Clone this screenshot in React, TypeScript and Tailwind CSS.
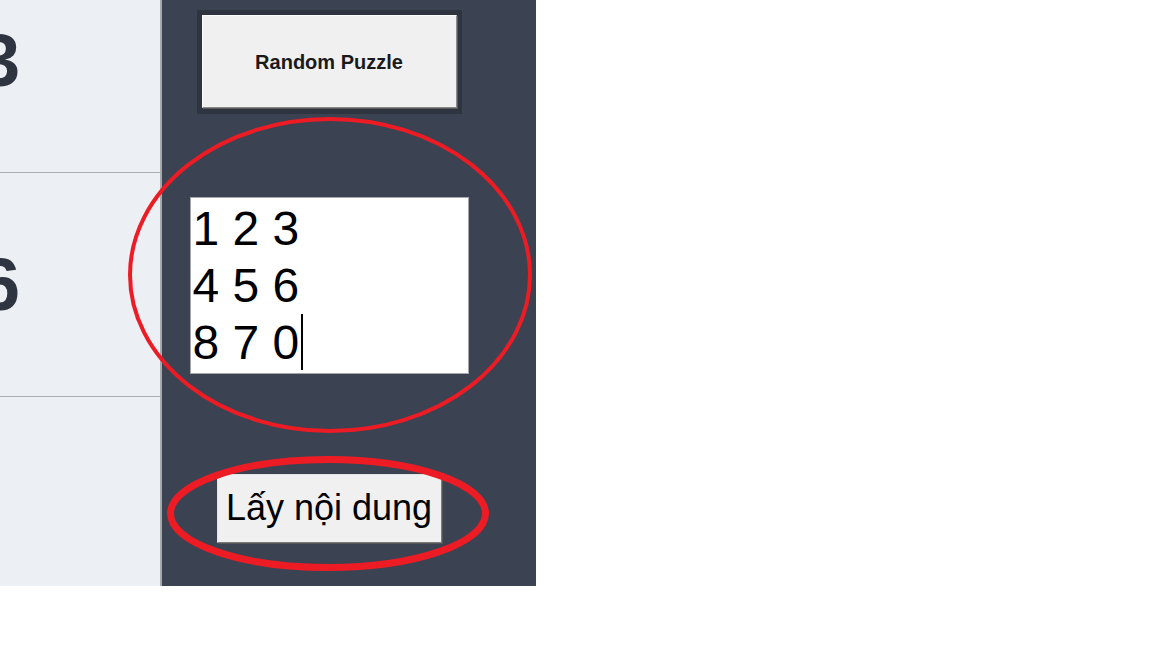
import React from 'react';

const cells = ['3', '6', ''];

const Board: React.FC = () => (
    <div className="h-full w-[162px] shrink-0 overflow-hidden bg-[#eceff4] border-r-2 border-r-[#a7a9ad]">
        <div className="-mt-[51px]">
            {cells.map((value, i) => (
                <div
                    key={i}
                    className="flex h-[224px] items-center border-b border-b-[#adafb3]"
                >
                    <span className="-ml-[21px] text-[74px] font-bold leading-none text-[#2e3440]">
                        {value}
                    </span>
                </div>
            ))}
        </div>
    </div>
);

const Controls: React.FC = () => (
    <div className="h-full w-[374px] shrink-0 bg-[#3b4252]">
        <div className="flex w-[334px] flex-col items-center pt-[10px]">
            {/* random puzzle button sits in a darker frame */}
            <div className="bg-[#2e3440] p-[5px] pb-[6px] pr-[5px]">
                <button className="flex h-[93px] w-[255px] items-center justify-center border border-t-white border-l-white border-r-[#8a8a8a] border-b-[#8a8a8a] bg-[#f0f0f0] text-[20px] font-bold text-[#1a1a1a] shadow-[1px_1px_0_#5a5a5a]">
                    Random Puzzle
                </button>
            </div>

            {/* puzzle text box */}
            <div className="mt-[83px] h-[177px] w-[279px] border border-[#a3a6ab] bg-white pl-[2px] pt-[2px] text-[48px] leading-[57px] text-black">
                <div>1 2 3</div>
                <div>4 5 6</div>
                <div>
                    8 7 0
                    <span className="ml-[2px] inline-block h-[56px] w-[2px] bg-black align-top" />
                </div>
            </div>

            <button className="mt-[100px] flex h-[69px] w-[225px] items-center justify-center border border-t-[#e3e3e3] border-l-[#e3e3e3] border-r-[#7a7a7a] border-b-[#7a7a7a] bg-[#f0f0f0] pb-[2px] text-[36px] text-black shadow-[1px_1px_0_#555]">
                Lấy nội dung
            </button>
        </div>
    </div>
);

export default function App() {
    return (
        <div
            className="relative h-[648px] w-[1152px] overflow-hidden bg-white"
            style={{ fontFamily: '"Liberation Sans", Arial, sans-serif' }}
        >
            <div className="flex h-[586px]">
                <Board />
                <Controls />
            </div>

            {/* red annotation marks */}
            <svg
                className="pointer-events-none absolute left-0 top-0"
                width="1152"
                height="648"
                viewBox="0 0 1152 648"
            >
                <ellipse cx="330" cy="275" rx="200" ry="156" fill="none" stroke="#ed1c24" strokeWidth="4" />
                <ellipse cx="328" cy="513.5" rx="157.5" ry="54" fill="none" stroke="#ed1c24" strokeWidth="7" />
            </svg>
        </div>
    );
}
